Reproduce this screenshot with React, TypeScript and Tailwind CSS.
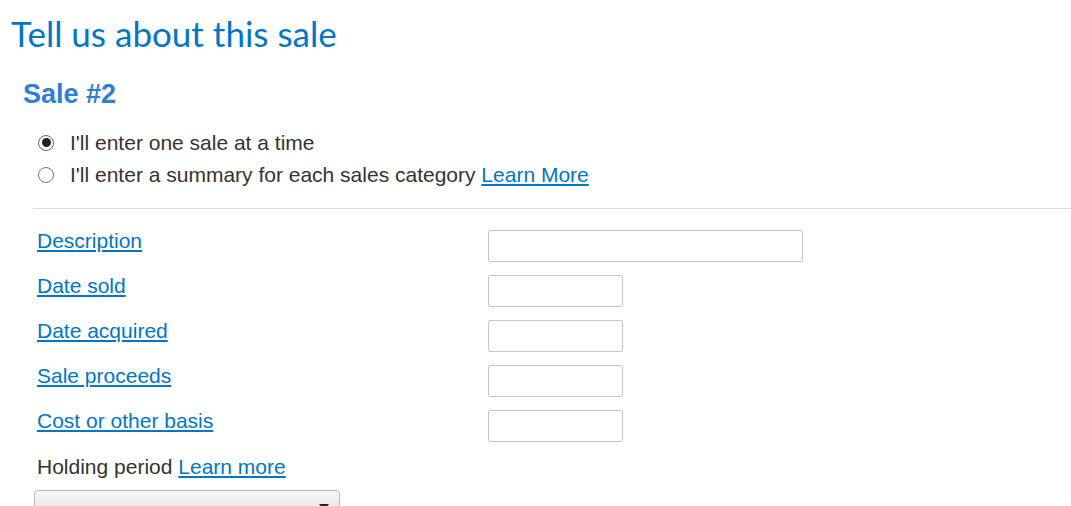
import React from "react";

const fields = [
  { label: "Description", wide: true },
  { label: "Date sold" },
  { label: "Date acquired" },
  { label: "Sale proceeds" },
  { label: "Cost or other basis" },
];

export default function App() {
  return (
    <main className="min-h-screen bg-white font-['Liberation_Sans',Arial,sans-serif] text-[#333]">
      <div className="pl-[11px] pt-[13px]">
        <h1 className="font-['Lato',sans-serif] text-[35px] leading-[40px] text-[#0077c5]">
          Tell us about this sale
        </h1>
      </div>

      <section className="pl-[23px] pt-[25px]">
        <h2 className="text-[27px] font-bold leading-[32px] text-[#2b80d6]">
          Sale #2
        </h2>

        <div className="mt-[22px] flex flex-col gap-[11px] pl-[15px] text-[21px] leading-[21px]">
          <label className="flex items-center gap-[16px]">
            <span className="flex h-[16px] w-[16px] items-center justify-center rounded-full border border-[#666] bg-white">
              <span className="h-[9px] w-[9px] rounded-full bg-[#222]" />
            </span>
            <span>I'll enter one sale at a time</span>
          </label>
          <label className="flex items-center gap-[16px]">
            <span className="h-[16px] w-[16px] rounded-full border border-[#777] bg-white" />
            <span>
              I'll enter a summary for each sales category{" "}
              <a href="#" className="text-[#0077c5] underline">
                Learn More
              </a>
            </span>
          </label>
        </div>
      </section>

      <hr className="ml-[33px] mt-[23px] border-t border-[#dcdcdc]" />

      <div className="mt-[21px] flex flex-col gap-[13px] pl-[37px]">
        {fields.map((f) => (
          <div key={f.label} className="grid grid-cols-[451px_1fr] items-start">
            <a
              href="#"
              className="pt-[1px] text-[21px] leading-[20px] text-[#0077c5] underline"
            >
              {f.label}
            </a>
            <input
              className={`h-[32px] rounded-[2px] border border-[#c6c6c6] bg-white ${
                f.wide ? "w-[315px]" : "w-[135px]"
              }`}
            />
          </div>
        ))}
      </div>

      <div className="mt-[14px] pl-[37px] text-[21px] leading-[21px]">
        Holding period{" "}
        <a href="#" className="text-[#0077c5] underline">
          Learn more
        </a>
      </div>

      <div className="ml-[34px] mt-[13px] flex h-[36px] w-[306px] items-start justify-end rounded-[4px] border border-[#b8b8b8] bg-gradient-to-b from-[#f6f6f6] to-[#dcdcdc] pr-[10px] pt-[13px]">
        <span className="block h-0 w-0 border-x-[5px] border-t-[6px] border-x-transparent border-t-[#222]" />
      </div>
    </main>
  );
}
